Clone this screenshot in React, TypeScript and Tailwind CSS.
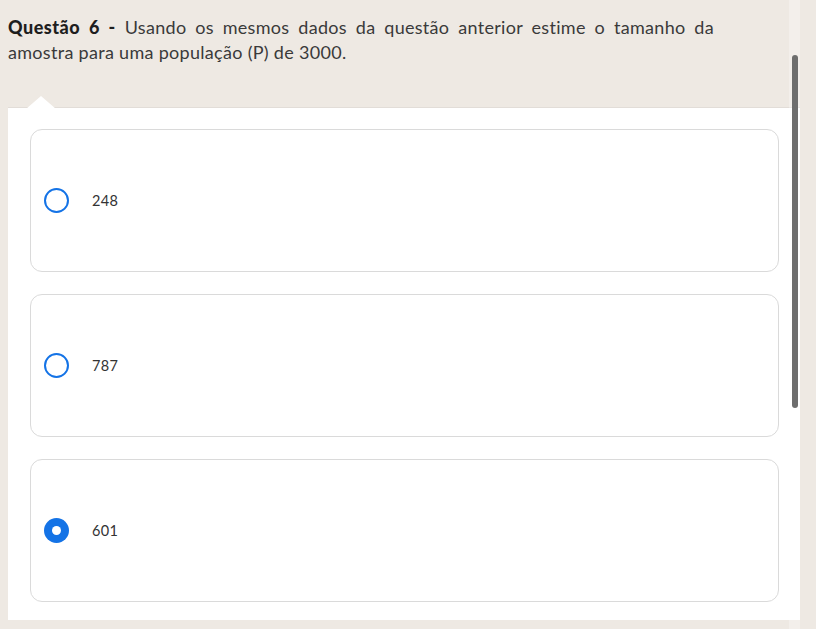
import React from "react";

interface OptionProps {
  label: string;
  checked?: boolean;
}

const Option = ({ label, checked }: OptionProps) => {
  return (
    <div className="h-[143px] rounded-xl border border-[#dadada] bg-white flex items-center pl-[13px]">
      {checked ? (
        <span className="w-[25px] h-[25px] rounded-full bg-[#1473e6] flex items-center justify-center">
          <span className="w-[9px] h-[9px] rounded-full bg-white" />
        </span>
      ) : (
        <span className="w-[25px] h-[25px] rounded-full border-[2.5px] border-[#1473e6] bg-white" />
      )}
      <span className="ml-[23px] text-[14.5px] text-[#333] tracking-[0.4px]">{label}</span>
    </div>
  );
};

export default function App() {
  return (
    <div
      className="relative w-[816px] h-[629px] overflow-hidden bg-[#eee9e3]"
      style={{ fontFamily: "Lato, 'Noto Sans', sans-serif" }}
    >
      <div className="pl-2 pt-[15px]">
        <p className="w-[706px] text-[18px] leading-[25px] text-[#3a3a3a] tracking-[0.3px]">
          <span className="block text-justify [text-align-last:justify]">
            <b className="text-[#1e1e1e] font-black tracking-[0.5px]">Questão 6 -</b> Usando os mesmos dados da questão anterior estime o tamanho da
          </span>
          amostra para uma população (P) de 3000.
        </p>
        <div className="relative mt-[42px] w-[792px] h-[513px] bg-white border-t border-[#e2ddd8]">
          <svg className="absolute left-[18px] -top-[13px]" width="30" height="14" viewBox="0 0 30 14">
            <path d="M0 14 L15 1 L30 14 Z" fill="#ffffff" />
          </svg>
          <div className="flex flex-col gap-[22px] pl-[22px] pr-[21px] pt-[21px]">
            <Option label="248" />
            <Option label="787" />
            <Option label="601" checked />
          </div>
        </div>
      </div>
      <div className="absolute top-0 left-[789px] w-[11px] h-full bg-white/30">
        <div className="absolute left-[3px] top-[55px] w-[6px] h-[353px] rounded-full bg-[#6e6e6e]" />
      </div>
    </div>
  );
}
